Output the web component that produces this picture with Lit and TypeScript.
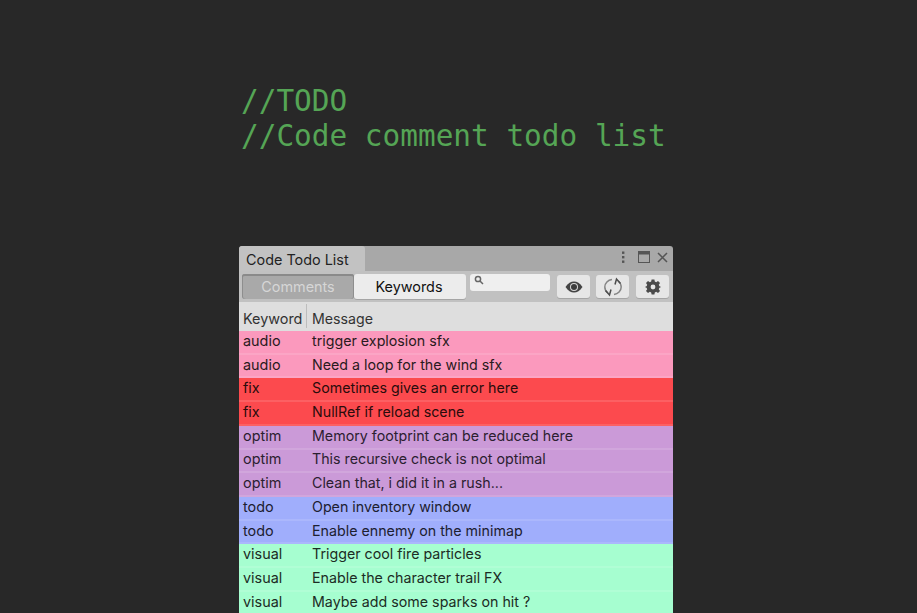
import { html, css, LitElement, svg } from 'lit'
import { customElement } from 'lit/decorators.js'

const rows = [
    ['audio', 'trigger explosion sfx', 'pink'],
    ['audio', 'Need a loop for the wind sfx', 'pink'],
    ['fix', 'Sometimes gives an error here', 'red'],
    ['fix', 'NullRef if reload scene', 'red'],
    ['optim', 'Memory footprint can be reduced here', 'purple'],
    ['optim', 'This recursive check is not optimal', 'purple'],
    ['optim', 'Clean that, i did it in a rush...', 'purple'],
    ['todo', 'Open inventory window', 'blue'],
    ['todo', 'Enable ennemy on the minimap', 'blue'],
    ['visual', 'Trigger cool fire particles', 'green'],
    ['visual', 'Enable the character trail FX', 'green'],
    ['visual', 'Maybe add some sparks on hit ?', 'green'],
]

const eye = svg`<svg width="18" height="12" viewBox="0 0 18 12"><path d="M0.5 6C3 2 6 0.5 9 0.5S15 2 17.5 6C15 10 12 11.5 9 11.5S3 10 0.5 6Z" fill="#444"/><circle cx="9" cy="6" r="4" fill="#d8d8d8"/><circle cx="9" cy="6" r="3" fill="#3c3c3c"/></svg>`

const sync = svg`<svg width="20" height="20" viewBox="0 0 20 20" fill="none" stroke-width="1.500"><g stroke="#858585"><path d="M9 2.500C5 3 1.800 6 1.800 10C1.800 12.500 3 14.600 5 16"/><path d="M11 17.500C15 17 18.200 14 18.200 10C18.200 7.500 17 5.400 15 4"/></g><g stroke="#4c4c4c"><path d="M2.500 13.500L6.500 18L8 12.500"/><path d="M17.500 6.500L13.500 2L12 7.500"/></g></svg>`

const gear = svg`<svg width="16" height="16" viewBox="0 0 16 16"><path fill="#4a4a4a" fill-rule="evenodd" d="M6.600 0.500H9.400L9.800 2.600L11.200 3.200L13 2L15 4L13.800 5.800L14.400 7.200L15.500 7.600V8.400L14.400 8.800L13.800 10.200L15 12L13 14L11.200 12.800L9.800 13.400L9.400 15.500H6.600L6.200 13.400L4.800 12.800L3 14L1 12L2.200 10.200L1.600 8.800L0.500 8.400V7.600L1.600 7.200L2.200 5.800L1 4L3 2L4.800 3.200L6.200 2.600ZM8 5.600A2.400 2.400 0 1 0 8 10.400A2.400 2.400 0 1 0 8 5.600Z"/></svg>`

@customElement('app-root')
export class AppRoot extends LitElement {
    static styles = css`
        :host {
            display: block;
            height: 613px;
            overflow: hidden;
            background: #282828;
            font-family: Inter, "Liberation Sans", sans-serif;
        }
        .code {
            padding: 84px 0 0 241px;
            height: 246px;
            box-sizing: border-box;
            font-family: "DejaVu Sans Mono", monospace;
            font-size: 29.4px;
            line-height: 35px;
            color: #55a555;
            white-space: pre;
        }
        .window {
            width: 434px;
            margin-left: 239px;
            border-radius: 3px 3px 0 0;
            overflow: hidden;
            color: #1c1c1c;
            font-size: 14.4px;
        }
        .titlebar {
            display: flex;
            height: 25px;
            background: #a8a8a8;
        }
        .tab {
            width: 126px;
            box-sizing: border-box;
            padding: 5px 0 0 7px;
            background: #c2c2c2;
            border-radius: 2px 3px 0 0;
            color: #222;
        }
        .window-actions {
            margin-left: auto;
            display: flex;
            align-items: center;
            padding: 0 5px 3px 0;
        }
        .dots {
            margin-right: 13px;
        }
        .maximize {
            margin-right: 7px;
        }
        .toolbar {
            display: flex;
            align-items: center;
            height: 31px;
            padding: 0 3px;
            background: #c1c1c1;
            box-sizing: border-box;
        }
        .segment {
            display: flex;
            height: 25px;
            width: 224px;
            margin-right: 4px;
        }
        .segment div {
            display: flex;
            align-items: center;
            justify-content: center;
            border-radius: 3px;
        }
        .comments {
            width: 112px;
            background: #a9a9a9;
            color: #d6d6d6;
            box-shadow: inset 0 2px 0 #8a8a8a, inset 1px 0 0 #8e8e8e, inset -1px 0 0 #8e8e8e;
        }
        .keywords {
            width: 112px;
            padding-right: 2px;
            box-sizing: border-box;
            background: #ececec;
            color: #111;
            box-shadow: 0 1px 0 #a5a5a5;
        }
        .search {
            width: 80px;
            height: 17px;
            margin: -8px 7px 0 0;
            box-sizing: border-box;
            padding: 1px 0 0 4px;
            background: #efefef;
            border-radius: 3px;
            display: flex;
        }
        .tool {
            width: 33px;
            height: 23px;
            margin-right: 6px;
            background: #e6e6e6;
            border-radius: 3px;
            box-shadow: 0 1px 0 #a5a5a5;
            display: flex;
            align-items: center;
            justify-content: center;
        }
        .tool:nth-last-child(2) {
            margin-right: 7px;
        }
        .tool:last-child {
            margin-right: 0;
        }
        .head {
            display: flex;
            height: 29px;
            background: #dedede;
            color: #333;
        }
        .head div {
            padding: 7px 0 0 4px;
            line-height: 20px;
        }
        .head .keyword {
            width: 64px;
            position: relative;
            box-sizing: border-box;
            padding-left: 4px;
            white-space: nowrap;
        }
        .head .keyword::after {
            content: "";
            position: absolute;
            right: -4px;
            top: 2px;
            bottom: 3px;
            width: 1px;
            background: #bdbdbd;
        }
        .head .message {
            padding-left: 9px;
            font-size: 14.2px;
        }
        .row {
            display: flex;
            height: 23.73px;
            box-sizing: border-box;
            align-items: center;
            border-bottom: 2px solid rgb(255 255 255 / 0.12);
            padding-bottom: 3px;
        }
        .row .keyword {
            width: 73px;
            padding-left: 4px;
            box-sizing: border-box;
        }
        .row .message {
            font-size: 14.25px;
        }
        .pink { background: #fb99bd; color: #2a1a20; }
        .red { background: #fc4a4e; color: #2a0c0c; }
        .purple { background: #cb9ad8; color: #2b2030; }
        .blue { background: #a0aefc; color: #1c2030; }
        .green { background: #a6fed0; color: #1c2c24; }
    `

    render() {
        return html`
        <div class="code">//TODO
//Code comment todo list</div>
        <div class="window">
            <div class="titlebar">
                <div class="tab">Code Todo List</div>
                <div class="window-actions">
                    <svg class="dots" width="4" height="13" viewBox="0 0 4 13" fill="#555"><rect x="1" y="0.500" width="2.400" height="2.400"/><rect x="1" y="5" width="2.400" height="2.400"/><rect x="1" y="9.500" width="2.400" height="2.400"/></svg>
                    <svg class="maximize" width="12" height="12" viewBox="0 0 12 12" fill="none" stroke="#555"><rect x="0.500" y="0.500" width="11" height="11"/><rect x="0.500" y="0.500" width="11" height="2.500" fill="#555"/></svg>
                    <svg width="11" height="11" viewBox="0 0 11 11" stroke="#555" stroke-width="1.500"><path d="M1 1L10 10M10 1L1 10"/></svg>
                </div>
            </div>
            <div class="toolbar">
                <div class="segment">
                    <div class="comments">Comments</div>
                    <div class="keywords">Keywords</div>
                </div>
                <div class="search">
                    <svg width="10" height="10" viewBox="0 0 10 10" fill="none" stroke="#666" stroke-width="1.500"><circle cx="4" cy="4" r="2.600"/><path d="M6 6L9 9"/></svg>
                </div>
                <div class="tool">${eye}</div>
                <div class="tool">${sync}</div>
                <div class="tool">${gear}</div>
            </div>
            <div class="head">
                <div class="keyword">Keyword</div>
                <div class="message">Message</div>
            </div>
            ${rows.map(([keyword, message, tone]) => html`
                <div class="row ${tone}">
                    <div class="keyword">${keyword}</div>
                    <div class="message">${message}</div>
                </div>
            `)}
        </div>
        `
    }
}
